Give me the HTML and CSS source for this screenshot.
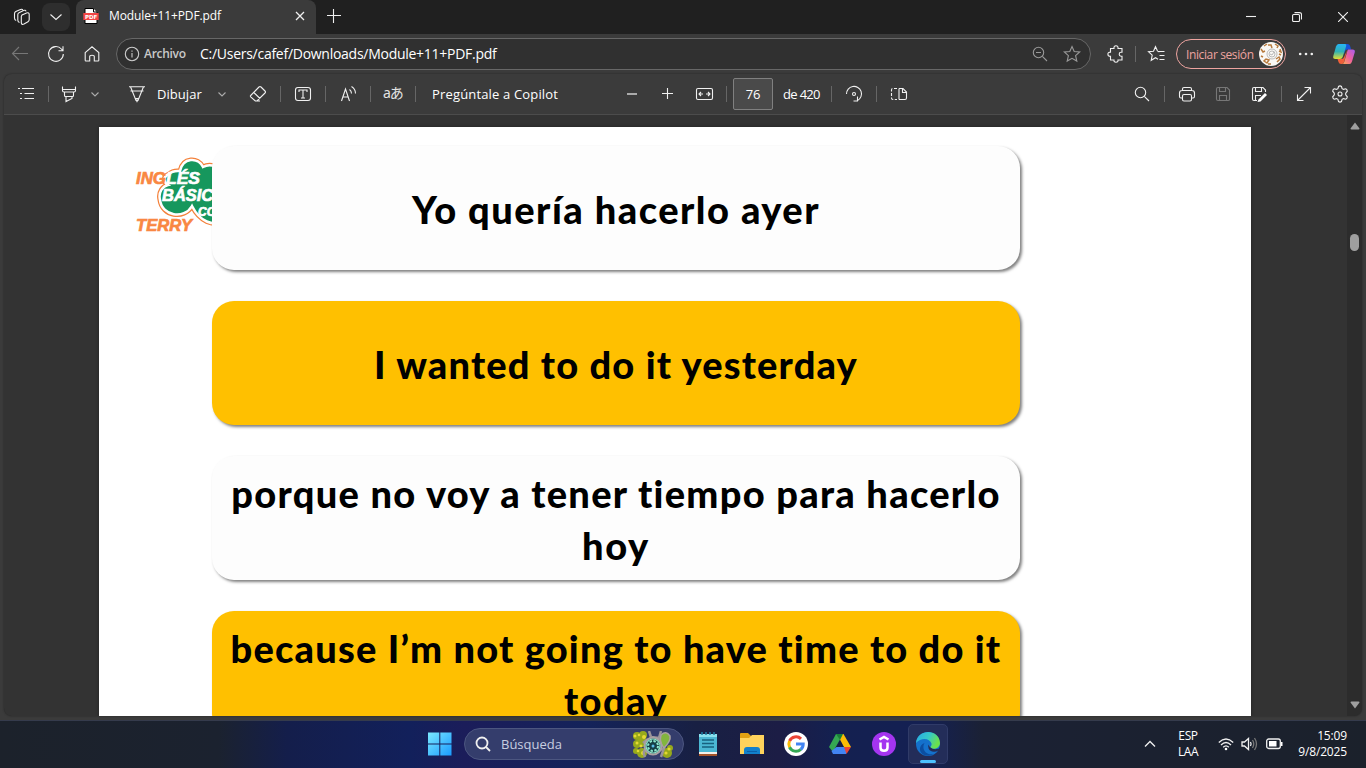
FILE: index.html
```html
<!DOCTYPE html>
<html lang="es">
<head>
<meta charset="utf-8">
<title>Module+11+PDF.pdf</title>
<link rel="stylesheet" href="styles.css">
</head>
<body>
<div class="screen">
  <header class="tabstrip">
    <svg class="workspaces" width="18" height="18" viewBox="0 0 18 18"><path d="M8.500 7.200 13.500 5Q16.200 4.200 16.200 6.500V11.500Q16.200 13 15 13.700L11 16Q8.300 17.200 8.300 14.500V8.500Q8.300 7.500 9.500 6.800M6.500 14.500Q4.800 14 4.800 12V6.800Q4.800 5.300 6 4.700L10.500 2.500Q12.600 1.700 13 3.300M3.200 12.500Q1.500 12 1.500 10V5.800Q1.500 4.300 2.800 3.600L7.500 1.500Q9.200.8 9.800 1.900"/></svg>
    <button class="tab-menu"><svg width="14" height="8" viewBox="0 0 14 8"><path d="m1.500 1.500 5.500 5 5.500-5"/></svg></button>
    <div class="tab">
      <svg class="pdf-icon" width="16" height="16" viewBox="0 0 16 16"><path class="sheet" d="M2 .5H10.500L14 4V15.500H2Z"/><path class="fold" d="M10.500.5V4H14"/><path class="label" d="M.3 5H15.700V12H.3Z"/><text x="2" y="10.600">PDF</text></svg>
      <span class="tab-title">Module+11+PDF.pdf</span>
      <svg class="tab-close" width="10" height="10" viewBox="0 0 10 10"><path d="m1 1 8 8M9 1 1 9"/></svg>
    </div>
    <svg class="new-tab" width="14" height="14" viewBox="0 0 14 14"><path d="M6.500 0V14M0 6.500H14"/></svg>
    <div class="window-controls">
      <svg width="10" height="10" viewBox="0 0 10 10"><path d="M0 4.500H10"/></svg>
      <svg width="10" height="10" viewBox="0 0 10 10"><path d="M.6 3.500Q.6 2.500 1.600 2.500H6.500Q7.500 2.500 7.500 3.500V8.500Q7.500 9.500 6.500 9.500H1.600Q.6 9.500.6 8.500ZM2.500.6H7.500Q9.500.6 9.500 2.500V7.500"/></svg>
      <svg width="10" height="10" viewBox="0 0 10 10"><path d="m0 0 10 10M10 0 0 10"/></svg>
    </div>
  </header>

  <nav class="navbar">
    <svg class="dim" width="20" height="20" viewBox="0 0 20 20"><path d="M18 9.500H2.500M9 3 2.500 9.500 9 16"/></svg>
    <svg width="20" height="20" viewBox="0 0 20 20"><path d="M17.300 10A7.400 7.400 0 1 1 15.400 5L17 6.800M17 2.300V6.800H12.500"/></svg>
    <svg width="20" height="20" viewBox="0 0 20 20"><path d="M3.200 8.600 10 2.800 16.800 8.600V16.200Q16.800 17 16 17H12.300V12.500Q12.300 11.200 10 11.200T7.700 12.500V17H4Q3.200 17 3.200 16.200Z"/></svg>
    <div class="address">
      <svg class="info" width="16" height="16" viewBox="0 0 16 16"><circle cx="8" cy="8" r="6.700"/><path d="M8 7V11.500M8 4.400V5.700"/></svg>
      <span class="scheme">Archivo</span>
      <span class="url">C:/Users/cafef/Downloads/Module+11+PDF.pdf</span>
      <svg class="mid" width="16" height="16" viewBox="0 0 16 16"><circle cx="6.500" cy="6.500" r="5.200"/><path d="M10.400 10.400 15 15M4 6.500H9"/></svg>
      <svg class="mid" width="18" height="18" viewBox="0 0 18 18"><path d="m9 1.500 2.200 5 5.500.5-4.100 3.700 1.200 5.400L9 13.300l-4.800 2.800 1.200-5.400L1.300 7l5.500-.5Z"/></svg>
    </div>
    <svg width="20" height="20" viewBox="0 0 20 20"><path d="M4.500 4.500H8Q7.600 1.800 10 1.800T12 4.500H16V8.300H15Q13.200 8.300 13.200 10.200T15 12.200H16V16H12Q12.300 18.200 10 18.200T8 16H4.500V12.400Q1.900 12.400 1.900 10.200T4.500 8.100Z"/></svg>
    <i class="rule"></i>
    <svg width="20" height="20" viewBox="0 0 20 20"><path d="M11.500 7.500H17.500M12.500 11.500H17.500M12.500 15.500H17.500M10.500 7 8.500 2.700 6.500 7.200 1.500 7.700 5.200 11.100 4.200 16.300 8.500 13.700 11 15.200M10.500 7.500 12.500 7.700"/></svg>
    <button class="sign-in"><span>Iniciar sesión</span>
      <svg width="26" height="26" viewBox="0 0 26 26"><circle cx="13" cy="13" r="12" fill="#faf8f5"/><g class="doodle"><circle cx="14" cy="13" r="5"/><circle cx="14" cy="13" r="3"/><path d="m12 13 2 1 2-3"/></g><g class="cups"><path d="m6 5 3-2M3 8l2 3 2-1M10 4h3l1 3M17 3l3 2-1 2M22 8l1 3-2-1M6 20l3 2 2-3-3-1ZM18 18l3-2 1 2-3 3M3 15l2 1M10 23h3M21 13l2 1"/></g></svg>
    </button>
    <svg class="dots" width="20" height="20" viewBox="0 0 20 20"><circle cx="4.200" cy="10" r="1.300"/><circle cx="10" cy="10" r="1.300"/><circle cx="15.800" cy="10" r="1.300"/></svg>
    <svg class="copilot" width="24" height="24" viewBox="0 0 24 24">
      <defs>
        <linearGradient id="cpA" x1="0" y1="0" x2="0" y2="1"><stop offset="0" stop-color="#27b5f5"/><stop offset=".5" stop-color="#2fb2b5"/><stop offset="1" stop-color="#e2df35"/></linearGradient>
        <linearGradient id="cpB" x1="1" y1="0" x2="0" y2="1"><stop offset="0" stop-color="#a65cf0"/><stop offset=".5" stop-color="#f0609d"/><stop offset="1" stop-color="#ffb04e"/></linearGradient>
      </defs>
      <path fill="#1852d8" d="M11 2h4.500q2 0 2.600 2l1 3.500h-3.500q-2 0-2.600 1.500l-1 3Z"/>
      <path fill="#f0603a" d="M5.500 17h4q2 0 2.600-2l3-7-3 12q-.6 2-2.500 2H9q-2 0-2.500-2Z"/>
      <path fill="url(#cpA)" d="M6.500 2H13q1.800 0 1.200 2l-3.500 11q-.7 2-2.700 2H3.500q-3 0-2.200-3L4 4.500Q4.800 2 6.500 2Z"/>
      <path fill="url(#cpB)" d="M16 7.500h4.500q3 0 2.200 3L20 19.500Q19.200 22 17.500 22H9.700q2 0 2.500-2l3-10.500q.5-2 .8-2Z"/>
    </svg>
  </nav>

  <main class="viewer">
    <div class="pdfbar">
      <svg width="20" height="20" viewBox="0 0 20 20"><path d="M6 4.500H18M8.500 9.500H18M8.500 14.500H18M2 4.500H4M4 9.500H6M4 14.500H6"/></svg>
      <i class="rule"></i>
      <svg width="20" height="20" viewBox="0 0 20 20"><path d="M3.500 2.500V6.500Q3.500 8 5 8H15Q16.500 8 16.500 6.500V2.500M3.500 5.500H16.500M5.500 8V11.500Q5.500 12.500 6.500 12.500H13.500Q14.500 12.500 14.500 11.500V8M7 12.500V17.500L13 14.500V12.500"/></svg>
      <svg class="chev" width="12" height="20" viewBox="0 0 12 20"><path d="m2.500 8.500 3.500 3.500 3.500-3.500"/></svg>
      <svg width="20" height="20" viewBox="0 0 20 20"><path d="M2 2.800H18M3.500 2.800 9 16.500H11L16.500 2.800M3.500 7H16.500M8.500 14.500 10 17.500 11.500 14.500Z"/></svg>
      <span class="draw">Dibujar</span>
      <svg class="chev" width="12" height="20" viewBox="0 0 12 20"><path d="m2.500 8.500 3.500 3.500 3.500-3.500"/></svg>
      <svg width="20" height="20" viewBox="0 0 20 20"><path d="M2.700 11.500 11 3Q12 2 13 3L17 7Q18 8 17 9L9 17H7.300L2.700 12.800Q2 12 2.700 11.500ZM5.800 8.500 12 14.500M7 17H12"/></svg>
      <i class="rule"></i>
      <svg width="20" height="20" viewBox="0 0 20 20"><rect x="2.500" y="3.500" width="15" height="13" rx="2.500"/><path d="M6 8V6H14V8M10 6V14M8 14H12"/></svg>
      <i class="rule"></i>
      <svg width="20" height="20" viewBox="0 0 20 20"><path d="M3.500 17 7.500 5 11.500 17M4.700 13H10.300M11.500 5.500Q13.500 7 13.500 9.500M13.500 2.500Q17.500 5 17.500 9.500"/></svg>
      <i class="rule"></i>
      <span class="translate">aあ</span>
      <i class="rule"></i>
      <span class="ask">Pregúntale a Copilot</span>
      <svg width="20" height="20" viewBox="0 0 20 20"><path class="thick" d="M5 10H15"/></svg>
      <svg width="20" height="20" viewBox="0 0 20 20"><path d="M5 9.500H16M10.500 4V15"/></svg>
      <svg width="20" height="20" viewBox="0 0 20 20"><rect x="2.500" y="4.500" width="16" height="11" rx="1.500"/><path d="M5 10H9M12 10H16M7 8 5 10 7 12M14 8 16 10 14 12"/></svg>
      <i class="rule"></i>
      <span class="page-number">76</span>
      <span class="total">de 420</span>
      <i class="rule"></i>
      <svg width="20" height="20" viewBox="0 0 20 20"><path d="M2.500 10A7.500 7.500 0 1 1 13.500 16.500M13.500 12.500V17H9.500"/><circle cx="10" cy="10" r="1.500"/></svg>
      <i class="rule"></i>
      <svg width="20" height="20" viewBox="0 0 20 20"><path d="M10 4.500V15.500M10 4.500H14L17.500 8V14Q17.500 15.500 16 15.500H10M13.500 4.500V8.500H17.500"/><path class="dash" d="M8 4.500H4Q2.500 4.500 2.500 6V14Q2.500 15.500 4 15.500H8"/></svg>
      <svg width="20" height="20" viewBox="0 0 20 20"><circle cx="8.500" cy="8.500" r="5.200"/><path d="M12.300 12.300 17 17"/></svg>
      <i class="rule"></i>
      <svg width="20" height="20" viewBox="0 0 20 20"><path d="M5.500 6.500V5Q5.500 3.500 7 3.500H13Q14.500 3.500 14.500 5V6.500M5.500 14H4Q2.500 14 2.500 12.500V9Q2.500 6.500 5 6.500H15Q17.500 6.500 17.500 9V12.500Q17.500 14 16 14H14.500"/><rect x="5.500" y="10.500" width="9" height="6.500" rx="1.500"/></svg>
      <svg class="faint" width="20" height="20" viewBox="0 0 20 20"><path d="M3.500 5Q3.500 3.500 5 3.500H14L16.500 6V15.500Q16.500 16.500 15 16.500H5Q3.500 16.500 3.500 15ZM6.500 3.500V7.500H12.500V3.500M6.500 16.500V11.500H13.500V16.500"/></svg>
      <svg width="20" height="20" viewBox="0 0 20 20"><path d="M8 16.500H5Q3.500 16.500 3.500 15V5Q3.500 3.500 5 3.500H14L16.500 6V8M6.500 3.500V7.500H12.500V3.500M6.500 16.500V11.500H12"/><path class="solid" d="m9.500 15.500 6.500-6.500 2 2-6.500 6.500-3 .5Z"/></svg>
      <i class="rule"></i>
      <svg width="20" height="20" viewBox="0 0 20 20"><path d="M3.500 16.500 16.500 3.500M10.500 3.500H16.500V9.500M3.500 10.500V16.500H9.500"/></svg>
      <svg class="gear" width="20" height="20" viewBox="0 0 20 20"><path d="M8.500 2.500Q10 1.200 11.500 2.500L12.100 4.700 13.500 5.400 15.800 4.800Q17.300 5.500 17.300 7.200L15.700 9.200V10.800L17.300 12.800Q17.300 14.500 15.800 15.200L13.500 14.600 12.100 15.300 11.500 17.500Q10 18.800 8.500 17.500L7.900 15.300 6.500 14.600 4.200 15.200Q2.700 14.500 2.700 12.800L4.300 10.800V9.200L2.700 7.200Q2.700 5.500 4.200 4.800L6.500 5.400 7.900 4.700Z"/><circle cx="10" cy="10" r="2"/></svg>
    </div>
    <div class="canvas">
      <article class="page">
        <svg class="logo" width="80" height="80" viewBox="0 0 80 80">
          <path class="halo" d="M34 18C38 14 43 15 45 15C48 1 63 1 68 11C75 7 86 10 88 20V66C78 70 65 66 57 50C49 64 27 60 25 44C23 36 28 30 33 29C27 25 29 20 34 18Z"/>
          <path class="cloud" d="M34 18C38 14 43 15 45 15C48 1 63 1 68 11C75 7 86 10 88 20V66C78 70 65 66 57 50C49 64 27 60 25 44C23 36 28 30 33 29C27 25 29 20 34 18Z"/>
          <text class="orange" x="1" y="28" textLength="30" lengthAdjust="spacingAndGlyphs">ING</text>
          <text class="white" x="31" y="28" textLength="34" lengthAdjust="spacingAndGlyphs">LÉS</text>
          <text class="white" x="27" y="45" textLength="64" lengthAdjust="spacingAndGlyphs">BÁSICO</text>
          <text class="white small" x="63" y="60">CON</text>
          <text class="orange" x="1" y="75" textLength="56" lengthAdjust="spacingAndGlyphs">TERRY</text>
        </svg>
        <section class="cards">
          <p class="card white-card"><span class="l1">Yo quería hacerlo ayer</span></p>
          <p class="card gold-card"><span class="l2">I wanted to do it yesterday</span></p>
          <p class="card white-card"><span class="l3">porque no voy a tener tiempo para hacerlo</span><span class="l4">hoy</span></p>
          <p class="card gold-card"><span class="l5">because I’m not going to have time to do it</span><span class="l6">today</span></p>
        </section>
      </article>
      <div class="scrollbar">
        <svg width="10" height="8" viewBox="0 0 10 8"><path d="M5 .5 9.500 6.500Q9.500 7.500 8.500 7.500H1.500Q.5 7.500.5 6.500Z"/></svg>
        <i class="thumb"></i>
        <svg width="10" height="8" viewBox="0 0 10 8"><path d="M5 7.500 9.500 1.500Q9.500.5 8.500.5H1.500Q.5.5.5 1.500Z"/></svg>
      </div>
    </div>
  </main>

  <footer class="taskbar">
    <svg class="start" width="24" height="24" viewBox="0 0 24 24"><defs><linearGradient id="win" x1="0" y1="0" x2="1" y2="1"><stop offset="0" stop-color="#7be8ff"/><stop offset="1" stop-color="#1a9bff"/></linearGradient></defs><path fill="url(#win)" d="M0 .5H11.300V11.500H0ZM12.300.5H23.500V11.500H12.300ZM0 12.500H11.300V23.500H0ZM12.300 12.500H23.500V23.500H12.300Z"/></svg>
    <div class="search">
      <svg class="lens" width="16" height="16" viewBox="0 0 16 16"><circle cx="7" cy="7" r="5.500"/><path d="m11 11 4 4"/></svg>
      <span>Búsqueda</span>
      <svg class="art" width="42" height="27" viewBox="0 0 42 27">
        <g fill="#97a91b"><circle cx="5" cy="5" r="4"/><circle cx="11" cy="4" r="4"/><circle cx="5" cy="13" r="4"/><circle cx="10" cy="11" r="5"/><circle cx="4" cy="20" r="3"/><circle cx="10" cy="22" r="5"/><circle cx="35" cy="22" r="5"/><circle cx="38" cy="17" r="3"/></g>
        <g fill="#e4d832"><circle cx="3" cy="5" r="1.500"/><circle cx="7" cy="4" r="1.300"/><circle cx="12" cy="6" r="2"/><circle cx="5" cy="12" r="1.500"/><circle cx="9" cy="15" r="1.500"/><circle cx="6" cy="20" r="1.300"/><circle cx="11" cy="22" r="2"/><circle cx="34" cy="22" r="1.600"/><circle cx="37" cy="18" r="1.600"/></g>
        <path d="M13 26Q10 20 15 17M17 0 19 6 27 7 29 0M26 20 32 17 29 26M11 12 16 8" fill="none" stroke="#9a9499" stroke-width="2.500"/>
        <path fill="#82b53e" stroke="#aaa1a2" stroke-width="1.500" d="M29 4Q34-1 38 5 39 10 32 17 27 11 29 4Z"/>
        <circle cx="21" cy="15" r="8.500" fill="#163e46" stroke="#aaa1a2" stroke-width="2"/><circle cx="21" cy="15" r="5" class="wheel"/><circle cx="21" cy="15" r="7" fill="none" stroke="#8de6cc" stroke-width="1.200"/><circle cx="21" cy="15" r="1.500" fill="#5bbce8"/>
      </svg>
    </div>
    <svg class="app" width="24" height="24" viewBox="0 0 24 24"><path fill="#4bb7d3" d="M3 2H21V21H3Z"/><path fill="#8ae1ee" d="M3 2H21V5H3Z"/><path fill="#f3efe8" d="M3 20H21V22H3Z"/><path fill="#a4542a" d="M3 22H21V24H3Z"/><path stroke="#17617f" stroke-width="1.500" d="M6 8H18M6 11.500H18M6 15H18"/><path stroke="#1c7fa2" stroke-width="1.500" d="M6 0V3M10 0V3M14 0V3M18 0V3"/></svg>
    <svg class="app" width="24" height="24" viewBox="0 0 24 24"><path fill="#e2a112" d="M0 2Q0 1 1 1H8L11 4V7H0Z"/><path fill="#ffd35c" d="M0 6H9L12 3H24V22H0Z"/><path fill="#1280cc" d="M4 22V18Q4 15 7 15H17Q20 15 20 18V22Z"/><path fill="#0b5fa9" d="M7 19H17V20H7Z"/></svg>
    <svg class="app" width="24" height="24" viewBox="0 0 24 24"><circle cx="12" cy="12" r="12" fill="#fff"/><g fill="none" stroke-width="3"><path stroke="#ea4335" d="M5.500 9A7.200 7.200 0 0 1 17 6.800"/><path stroke="#fbbc05" d="M5.500 9A7.500 7.500 0 0 0 5.600 15.400"/><path stroke="#34a853" d="M5.500 15.300A7.200 7.200 0 0 0 16.800 17.300"/><path stroke="#4285f4" d="M12 12H19.200Q19.200 15.500 16.800 17.500"/></g></svg>
    <svg class="app" width="24" height="24" viewBox="0 0 24 24"><path fill="#34a853" d="M8 2H15L5 20 1 15Z"/><path fill="#fbbc05" d="M9 2H15.500L23 15H16Z"/><path fill="#4285f4" d="M8.500 15H20L18 22H5L3.500 19Z"/><path fill="#ea4335" d="M16 15H23L18.500 22Z"/><path fill="#151d43" d="m12 9 3.500 6H8.500Z"/><path fill="#188038" d="M8 2H15L12 8Z"/></svg>
    <svg class="app" width="24" height="24" viewBox="0 0 24 24"><circle cx="12" cy="12" r="12" fill="#a435f0"/><path d="M7.500 7.500 12 5 16.500 7.500M8.500 10.500V15.500Q8.500 18.800 12 18.800T15.500 15.500V10.500" fill="none" stroke="#fff" stroke-width="2.500"/></svg>
    <div class="active-app">
      <svg width="24" height="24" viewBox="0 0 24 24"><defs><linearGradient id="edge" x1="0" y1="0" x2="1" y2=".4"><stop offset="0" stop-color="#28a8e6"/><stop offset=".55" stop-color="#35c8c7"/><stop offset="1" stop-color="#6be24b"/></linearGradient></defs><circle cx="12" cy="12" r="12" fill="#1471cc"/><path fill="url(#edge)" d="M0 11C1-3 23-4 24 11C24 17 16 18 14.500 15.500C14 14.500 16 14 15.500 11.500C14 6 5 5 0 11Z"/><path fill="#0c4ea1" d="M8.500 11C5 17 10 24 18 22Q14 25 8 23C2 20 3 13 8.500 11Z"/><path fill="#222d58" d="M14.500 15.500Q17 18 22.500 16.800L24.500 15.500V20L22.300 18.500Q18 21 14 18.500 11.500 16 12.500 12.500 13 14.500 14.500 15.500Z"/></svg>
      <i class="indicator"></i>
    </div>
    <div class="tray">
      <svg class="up" width="12" height="8" viewBox="0 0 12 8"><path d="m1 6.500 5-5 5 5"/></svg>
      <p class="lang">ESP<br>LAA</p>
      <svg width="16" height="14" viewBox="0 0 16 14"><path d="M.8 5.500Q8-1.500 15.200 5.500M3 8Q8 3 13 8M5.200 10.200Q8 7.500 10.800 10.200"/><circle class="solid" cx="8" cy="12" r="1.300"/></svg>
      <svg width="17" height="14" viewBox="0 0 17 14"><path d="M1 5H3.500L7.500 1.500V12.500L3.500 9H1ZM9.500 5Q10.700 7 9.500 9"/><path class="muted" d="M11.500 3Q14 7 11.500 11M13.500 1Q17.500 7 13.500 13"/></svg>
      <svg width="17" height="12" viewBox="0 0 17 12"><rect x=".7" y="1" width="13.600" height="9.500" rx="2"/><path class="solid" d="M3 3H10.500V8.500H3ZM15 4H16.500V8H15Z"/></svg>
      <p class="clock">15:09<br><span>9/8/2025</span></p>
    </div>
  </footer>
</div>
</body>
</html>
```
FILE: styles.css
```css
* { box-sizing: border-box; }
body { margin: 0; background: #3b3b3b; overflow: hidden; font-family: "Open Sans", "Noto Sans", sans-serif; color: #fff; }
p { margin: 0; }
button { padding: 0; border: 0; font: inherit; color: inherit; background: none; }
span { white-space: nowrap; }
svg { display: block; flex: none; fill: none; stroke: #f0f0f0; stroke-width: 1.1; }
.screen { width: 1366px; height: 768px; display: flex; flex-direction: column; overflow: hidden; }

.tabstrip { height: 34px; flex: none; display: flex; align-items: center; background: #202020; }
.workspaces { margin: 0 11px 0 13px; }
.tab-menu { width: 28px; height: 28px; display: grid; place-items: center; border-radius: 8px; background: #2e2e2e; }
.tab { width: 240px; height: 34px; margin-left: 6px; padding: 0 11px 3px 7px; display: flex; align-items: center; border-radius: 8px 8px 0 0; background: #3b3b3b; }
.tab-title { width: 192px; margin-left: 10px; font-size: 12px; letter-spacing: -.12px; }
.tab-close { stroke-width: 1.3; }
.pdf-icon { stroke-width: .8; }
.pdf-icon .sheet, .pdf-icon .fold { fill: #fff; stroke: #000; stroke-width: 1; }
.pdf-icon .label { fill: #f34545; stroke: none; }
.pdf-icon text { fill: #fff; stroke: none; font: bold 5.5px "DejaVu Sans", sans-serif; }
.new-tab { margin-left: 11px; margin-bottom: 2px; }
.window-controls { margin-left: auto; padding-right: 18px; display: flex; gap: 36px; }

.navbar { height: 40px; flex: none; padding-left: 10px; display: grid; align-items: center; grid-template-columns: 36px 36px 34px 990px 29px 12px 29px 120px 36px 24px; }
.dim { stroke: #777; }
.address { width: 975px; height: 32px; display: flex; align-items: center; padding: 0 9px 0 7px; border: 1px solid #676767; border-radius: 16px; background: #303030; }
.info { stroke: #ccc; }
.scheme { width: 56px; margin-left: 4px; padding-bottom: 1px; font-size: 12px; font-weight: 600; letter-spacing: -.3px; color: #c9c9c9; }
.url { flex: 1; padding-bottom: 1px; font-size: 14px; letter-spacing: -.27px; }
.mid { stroke: #999; margin-left: 15px; }
.rule { width: 1px; height: 16px; background: #666; }
.sign-in { width: 110px; height: 30px; display: flex; align-items: center; justify-content: space-between; padding: 0 1px 0 9px; border: 1px solid #eea4a0; border-radius: 15px; color: #eea4a0; font-size: 12px; letter-spacing: -.38px; }
.sign-in svg { stroke: none; }
.sign-in .doodle { stroke: #aaa; stroke-width: .8; }
.sign-in .cups { stroke: #b87a3d; stroke-width: 1.5; }
.dots { fill: #f0f0f0; stroke: none; }
.copilot { stroke: none; }

.viewer { height: 642px; flex: none; width: 1358px; margin-left: 4px; border-radius: 8px; background: #333; overflow: hidden; box-shadow: 0 0 2px #222; }
.pdfbar { height: 41px; padding-left: 12px; display: grid; align-items: center; background: #3b3b3b; border-bottom: 1px solid #4c4c4c;
  grid-template-columns: 32px 11px 30px 38px 30px 59px 32px 32px 13px 32px 13px 32px 13px 32px 17px 190px 35px 37px 32px 7px 50px 48px 13px 32px 13px 243px 32px 13px 36px 36px 32px 13px 36px 20px; }
.chev { stroke: #aaa; }
.draw, .ask, .total, .page-number { font-size: 13px; }
.draw { letter-spacing: .05px; }
.ask { letter-spacing: .16px; }
.total { letter-spacing: -.8px; word-spacing: .5px; }
.page-number { letter-spacing: -.3px; }
.translate { padding-bottom: 2px; font: 14px/20px "Noto Sans", "Noto Sans CJK JP", sans-serif; letter-spacing: -1px; color: #e4e4e4; }
.thick { stroke: #aaa; stroke-width: 2; }
.page-number { width: 40px; height: 32px; display: grid; place-items: center; border: 1px solid #808080; border-radius: 2px; background: #4a4a4a; }
.dash { stroke-dasharray: 3 1.5; }
.faint { stroke: #777; }
svg .solid { fill: #fff; stroke: none; }

.canvas { height: 601px; display: flex; align-items: flex-start; }
.page { position: relative; width: 1152px; height: 589px; margin: 12px 0 0 95px; padding: 19px 0 0 113px; background: #fff; overflow: hidden; box-shadow: 0 0 3px #222; }
.logo { position: absolute; left: 36px; top: 29px; stroke: none; }
.logo .cloud { fill: #16975d; stroke: #fff; stroke-width: 2.5; }
.logo .halo { fill: none; stroke: #f4823c; stroke-width: 5; }
.logo text { font: italic bold 17px "Liberation Sans", sans-serif; stroke-width: .7; }
.logo .orange { fill: #f98742; stroke: #f98742; }
.logo .white { fill: #fff; stroke: #fff; }
.logo .small { font-size: 12px; }
.cards { position: relative; width: 808px; display: flex; flex-direction: column; gap: 31px; }
.card { height: 124px; flex: none; padding-top: 1px; display: flex; flex-direction: column; align-items: center; justify-content: center; border-radius: 22px; color: #000; font: 900 38px/52px Lato, sans-serif; box-shadow: 2px 2px 3px rgba(0,0,0,.5); }
.white-card { background: #fdfdfd; }
.gold-card { background: #ffc000; }
.l1 { letter-spacing: 1.48px; }
.l2 { letter-spacing: 1.17px; }
.l3 { letter-spacing: 1.28px; }
.l4 { letter-spacing: 1.6px; }
.l5 { letter-spacing: 1.18px; }
.l6 { letter-spacing: 1.4px; }
.scrollbar { width: 15px; height: 601px; margin-left: 96px; padding: 7px 0; display: flex; flex-direction: column; align-items: center; background: #2c2c2c; }
.scrollbar svg { fill: #9f9f9f; stroke: none; }
.thumb { width: 9px; height: 17px; margin: 104px 0 auto; border-radius: 5px; background: #9f9f9f; }

.taskbar { height: 48px; flex: none; margin-top: 4px; display: flex; align-items: center; background: linear-gradient(90deg, #1c222b 0, #1b222f 16%, #141e4b 21%, #12205b 30%, #1b1d5a 34%, #14235a 43%, #182043 51%, #1c1d45 57%, #142050 61%, #142053 68%, #1b2134 72%, #1b212b 100%); box-shadow: inset 0 1px #353b4c; }
.taskbar svg { stroke-width: 1.3; }
.start { margin-left: 428px; }
.search { width: 220px; height: 32px; margin: 0 12px; padding: 0 9px 0 10px; display: flex; align-items: center; border: 1px solid #4c5680; border-radius: 16px; background: #343d6c; color: #c8cde0; font-size: 13px; }
.search span { margin: 0 auto 0 10px; }
.taskbar .lens { stroke-width: 1.8; }
.taskbar .start, .search .art, .app, .active-app svg { stroke: none; }
.art .wheel { fill: none; stroke: #8de6cc; stroke-width: 2; stroke-dasharray: 2.4 1.5; }
.app { margin-right: 20px; }
.active-app { position: relative; width: 40px; height: 40px; margin-left: -8px; display: grid; place-items: center; border: 1px solid #303b68; border-radius: 5px; background: #232d59; }
.indicator { position: absolute; left: 11px; bottom: 0; width: 16px; height: 3px; border-radius: 2px; background: #4cc2ff; }
.tray { width: 222px; margin-left: auto; padding-right: 19px; display: grid; align-items: center; grid-template-columns: 24px 50px 23px 25px 17px 1fr; font-size: 12px; line-height: 16px; }
.lang { width: 40px; text-align: center; letter-spacing: -.4px; }
.clock { text-align: right; letter-spacing: -.15px; }
.muted { stroke: #777; }
```
